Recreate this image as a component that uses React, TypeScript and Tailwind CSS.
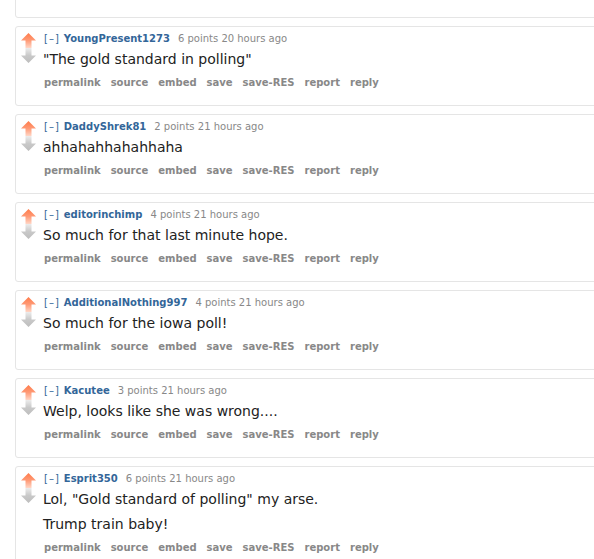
import React from "react";

type C = { author: string; points: string; time: string; body: string[] };

const comments: C[] = [
  { author: "YoungPresent1273", points: "6 points", time: "20 hours ago", body: ['"The gold standard in polling"'] },
  { author: "DaddyShrek81", points: "2 points", time: "21 hours ago", body: ["ahhahahhahahhaha"] },
  { author: "editorinchimp", points: "4 points", time: "21 hours ago", body: ["So much for that last minute hope."] },
  { author: "AdditionalNothing997", points: "4 points", time: "21 hours ago", body: ["So much for the iowa poll!"] },
  { author: "Kacutee", points: "3 points", time: "21 hours ago", body: ["Welp, looks like she was wrong...."] },
  { author: "Esprit350", points: "6 points", time: "21 hours ago", body: ['Lol, "Gold standard of polling" my arse.', "Trump train baby!"] },
];

const buttons = ["permalink", "source", "embed", "save", "save-RES", "report", "reply"];

function UpArrow() {
  return (
    <svg width="15" height="15" viewBox="0 0 15 15" className="block">
      <defs>
        <linearGradient id="upg" x1="0" y1="0" x2="0" y2="1">
          <stop offset="0" stopColor="#ff7b4a" />
          <stop offset="0.5" stopColor="#ff9a76" />
          <stop offset="1" stopColor="#ffd6c6" />
        </linearGradient>
      </defs>
      <path d="M7.5 0 L15 7.5 L10.5 7.5 L10.5 15 L4.5 15 L4.5 7.5 L0 7.5 Z" fill="url(#upg)" />
    </svg>
  );
}

function DownArrow() {
  return (
    <svg width="15" height="15" viewBox="0 0 15 15" className="block">
      <defs>
        <linearGradient id="dng" x1="0" y1="0" x2="0" y2="1">
          <stop offset="0" stopColor="#ececec" />
          <stop offset="0.5" stopColor="#c9c9c9" />
          <stop offset="1" stopColor="#bdbdbd" />
        </linearGradient>
      </defs>
      <path d="M4.5 0 L10.5 0 L10.5 7.5 L15 7.5 L7.5 15 L0 7.5 L4.5 7.5 Z" fill="url(#dng)" />
    </svg>
  );
}

function Comment({ c }: { c: C }) {
  return (
    <div className="ml-[15px] w-[600px] border border-[#e5e5e5] rounded-[3px] bg-white flex pt-[6px] pb-[16px]">
      <div className="w-[28px] pl-[5px] flex flex-col shrink-0">
        <UpArrow />
        <DownArrow />
      </div>
      <div className="flex flex-col">
        <div className="h-[12px] leading-[12px] text-[10px] whitespace-nowrap">
          <span className="text-[#369] tracking-[1px]">[–]</span>
          <span className="ml-[4px] font-bold text-[#369]">{c.author}</span>
          <span className="ml-[8px] text-[#888]">{c.points} {c.time}</span>
        </div>
        <div className="mt-[4px] flex flex-col gap-[5px] -ml-[1px]">
          {c.body.map((b, i) => (
            <p key={i} className="text-[14px] leading-[20px] text-[#222] whitespace-nowrap">
              {b}
            </p>
          ))}
        </div>
        <div className="mt-[8px] h-[12px] leading-[12px] text-[10px] font-bold text-[#888] flex gap-[10px] whitespace-nowrap">
          {buttons.map((b) => (
            <span key={b}>{b}</span>
          ))}
        </div>
      </div>
    </div>
  );
}

export default function App() {
  return (
    <div
      className="w-[594px] h-[559px] overflow-hidden bg-white"
      style={{ fontFamily: '"DejaVu Sans", Verdana, sans-serif' }}
    >
      <div className="flex flex-col gap-[8px] -mt-[62px]">
        <div className="ml-[15px] w-[600px] h-[80px] border border-[#e5e5e5] rounded-[3px] bg-white" />
        {comments.map((c) => (
          <Comment key={c.author} c={c} />
        ))}
      </div>
    </div>
  );
}
